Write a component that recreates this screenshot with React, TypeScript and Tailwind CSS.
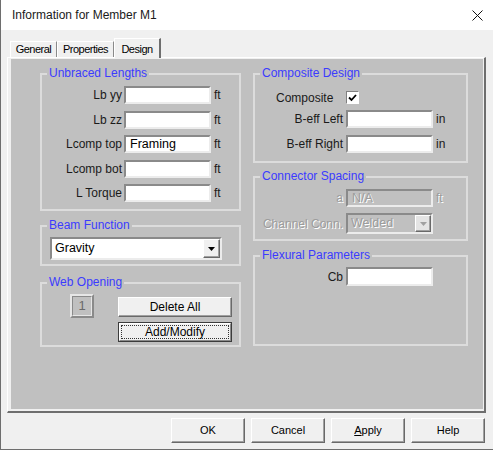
import React from 'react';

const sunken =
  'border-2 border-t-[#8a8a8a] border-l-[#8a8a8a] border-r-[#ececec] border-b-[#ececec]';
const raised =
  'border border-t-white border-l-white border-r-[#696969] border-b-[#696969] shadow-[inset_-1px_-1px_0_#a0a0a0]';
const disabledText = 'text-[#9c9c9c] [text-shadow:1px_1px_0_#ffffff]';

function Group({
  title,
  className,
  children,
}: {
  title: string;
  className: string;
  children?: React.ReactNode;
}) {
  return (
    <div className={`relative border-2 border-[#dcdcdc] ${className}`}>
      <span className="absolute left-[5px] top-[-9px] bg-[#c0c0c0] px-[2px] text-[12px] leading-[14px] text-[#3b3bff]">
        {title}
      </span>
      {children}
    </div>
  );
}

function Field({
  label,
  labelW,
  value = '',
  unit,
  h = 18,
  gap = 2,
  disabled = false,
}: {
  label: string;
  labelW: string;
  value?: string;
  unit?: string;
  h?: number;
  gap?: number;
  disabled?: boolean;
}) {
  return (
    <div className="flex items-center">
      <span
        className={`${labelW} text-right text-[12px] leading-[14px] ${disabled ? disabledText : 'text-[#1a1a1a]'}`}
      >
        {label}
      </span>
      <div
        className={`${gap === 2 ? 'ml-[2px]' : 'ml-[3px]'} flex w-[87px] items-center ${sunken} ${disabled ? 'bg-[#c0c0c0]' : 'bg-white'}`}
        style={{ height: h }}
      >
        <span
          className={`pl-[4px] text-[12.5px] leading-[14px] ${disabled ? disabledText : 'text-black'}`}
        >
          {value}
        </span>
      </div>
      {unit && (
        <span
          className={`ml-[3px] text-[12px] leading-[14px] ${disabled ? disabledText : 'text-[#1a1a1a]'}`}
        >
          {unit}
        </span>
      )}
    </div>
  );
}

function Arrow({ color }: { color: string }) {
  return (
    <svg width="7" height="4" viewBox="0 0 7 4">
      <path d="M0 0H7L3.5 4Z" fill={color} />
    </svg>
  );
}

export default function App() {
  return (
    <div className="flex h-[450px] w-[493px] flex-col overflow-hidden border-b border-l border-[#6e6e6e] bg-[#f0f0f0] font-['Liberation_Sans',Arial,sans-serif] text-[12px] text-black">
      {/* Title bar */}
      <div className="flex h-[30px] items-center justify-between bg-white pl-[11px] pr-[10px]">
        <span className="text-[12px] text-[#1a1a1a]">Information for Member M1</span>
        <svg width="11" height="11" viewBox="0 0 11 11">
          <path d="M0.5 0.5L10.5 10.5M10.5 0.5L0.5 10.5" stroke="#111" strokeWidth="1" />
        </svg>
      </div>

      {/* Tabs */}
      <div className="flex h-[27px] items-end pl-[9px]">
        <div
          className={`flex h-[16px] w-[47px] items-center justify-center border-l border-t border-r border-l-white border-t-white border-r-[#8a8a8a] text-[11px] tracking-[-0.5px]`}
        >
          General
        </div>
        <div className="flex h-[16px] w-[57px] items-center justify-center border-l border-t border-r border-l-white border-t-white border-r-[#8a8a8a] text-[11px] tracking-[-0.5px]">
          Properties
        </div>
        <div className="relative z-10 -mb-px flex h-[20px] w-[47px] items-start justify-center border-l border-t border-r-2 border-l-white border-t-white border-r-[#6e6e6e] bg-[#f0f0f0] pt-[2px] text-[11px] tracking-[-0.5px]">
          Design
        </div>
      </div>

      {/* Tab panel */}
      <div className="ml-[6px] h-[356px] w-[479px] border-l border-t border-r-2 border-b-2 border-l-white border-t-white border-r-[#6e6e6e] border-b-[#6e6e6e] pb-[2px] pl-[3px] pr-[1px] pt-[1px]">
        <div className="flex h-full gap-[12px] bg-[#c0c0c0] pl-[29px] pt-[14px]">
          {/* Left column */}
          <div className="flex w-[201px] flex-col">
            <Group title="Unbraced Lengths" className="h-[138px]">
              <div className="flex flex-col gap-[6.5px] pt-[11px]">
                <Field label="Lb yy" labelW="w-[80px]" unit="ft" />
                <Field label="Lb zz" labelW="w-[80px]" unit="ft" />
                <Field label="Lcomp top" labelW="w-[80px]" value="Framing" unit="ft" />
                <Field label="Lcomp bot" labelW="w-[80px]" unit="ft" />
                <Field label="L Torque" labelW="w-[80px]" unit="ft" />
              </div>
            </Group>

            <Group title="Beam Function" className="mt-[14px] h-[41px]">
              <div className="pl-[8px] pt-[10px]">
                <div className={`flex h-[23px] w-[172px] items-center bg-white ${sunken}`}>
                  <span className="flex-1 pl-[3px] text-[12.5px]">Gravity</span>
                  <div className={`flex h-full w-[17px] items-center justify-center bg-[#f0f0f0] ${raised}`}>
                    <Arrow color="#000" />
                  </div>
                </div>
              </div>
            </Group>

            <Group title="Web Opening" className="mt-[16px] h-[65px]">
              <div className="flex items-start pl-[28px] pt-[10px]">
                <div className="flex h-[24px] w-[24px] items-center justify-center border-2 border-t-[#e6e6e6] border-l-[#e6e6e6] border-r-[#8a8a8a] border-b-[#8a8a8a] text-[13px] text-[#6a6a6a]">
                  <div className="flex h-full w-full items-center justify-center border border-t-[#8a8a8a] border-l-[#8a8a8a] border-r-[#e6e6e6] border-b-[#e6e6e6]">
                    1
                  </div>
                </div>
                <div className="ml-[24px] mt-[3px] flex flex-col gap-[5px]">
                  <div className={`flex h-[20px] w-[114px] items-center justify-center bg-[#f0f0f0] ${raised}`}>
                    Delete All
                  </div>
                  <div className="h-[20px] w-[114px] border border-[#3c3c3c] bg-[#f0f0f0]">
                    <div className="flex h-full w-full items-center justify-center border border-t-white border-l-white border-r-[#8a8a8a] border-b-[#8a8a8a] p-[1px]">
                      <div className="flex h-full w-full items-center justify-center border border-dotted border-[#333]">
                        Add/Modify
                      </div>
                    </div>
                  </div>
                </div>
              </div>
            </Group>
          </div>

          {/* Right column */}
          <div className="flex w-[215px] flex-col">
            <Group title="Composite Design" className="h-[90px]">
              <div className="flex flex-col pt-[16px]">
                <div className="flex h-[13px] items-center pl-[21px]">
                  <span className="w-[58px] text-[12px] text-[#1a1a1a]">Composite</span>
                  <div className="ml-[12px] flex h-[13px] w-[13px] items-center justify-center border border-t-[#808080] border-l-[#808080] border-r-white border-b-white bg-white">
                    <svg width="9" height="8" viewBox="0 0 9 8">
                      <path d="M1 3.5L3.5 6L8 1" fill="none" stroke="#000" strokeWidth="1.8" />
                    </svg>
                  </div>
                </div>
                <div className="mt-[6px]">
                  <Field label="B-eff Left" labelW="w-[88px]" gap={3} unit="in" />
                </div>
                <div className="mt-[7px]">
                  <Field label="B-eff Right" labelW="w-[88px]" gap={3} unit="in" />
                </div>
              </div>
            </Group>

            <Group title="Connector Spacing" className="mt-[13px] h-[65px]">
              <div className="flex flex-col pt-[11px]">
                <Field label="a" labelW="w-[88px]" gap={3} value="N/A" unit="ft" disabled />
                <div className="mt-[6px] flex items-center">
                  <span className={`w-[88px] text-right text-[12px] ${disabledText}`}>Channel Conn.</span>
                  <div className={`ml-[3px] flex h-[21px] w-[87px] items-center bg-[#c0c0c0] ${sunken}`}>
                    <span className={`flex-1 pl-[3px] text-[12.5px] ${disabledText}`}>Welded</span>
                    <div className={`flex h-full w-[16px] items-center justify-center bg-[#e4e4e4] ${raised}`}>
                      <Arrow color="#a0a0a0" />
                    </div>
                  </div>
                </div>
              </div>
            </Group>

            <Group title="Flexural Parameters" className="mt-[14px] h-[91px]">
              <div className="pt-[10px]">
                <Field label="Cb" labelW="w-[88px]" gap={3} h={19} />
              </div>
            </Group>
          </div>
        </div>
      </div>

      {/* Dialog buttons */}
      <div className="mt-[5px] flex justify-end gap-[6px] pr-[8px]">
        {['OK', 'Cancel', 'Apply', 'Help'].map((b) => (
          <div
            key={b}
            className={`flex h-[25px] w-[74px] items-center justify-center bg-[#f0f0f0] text-[11px] ${raised}`}
          >
            {b === 'Apply' ? (
              <span>
                <span className="underline">A</span>pply
              </span>
            ) : (
              b
            )}
          </div>
        ))}
      </div>
    </div>
  );
}
